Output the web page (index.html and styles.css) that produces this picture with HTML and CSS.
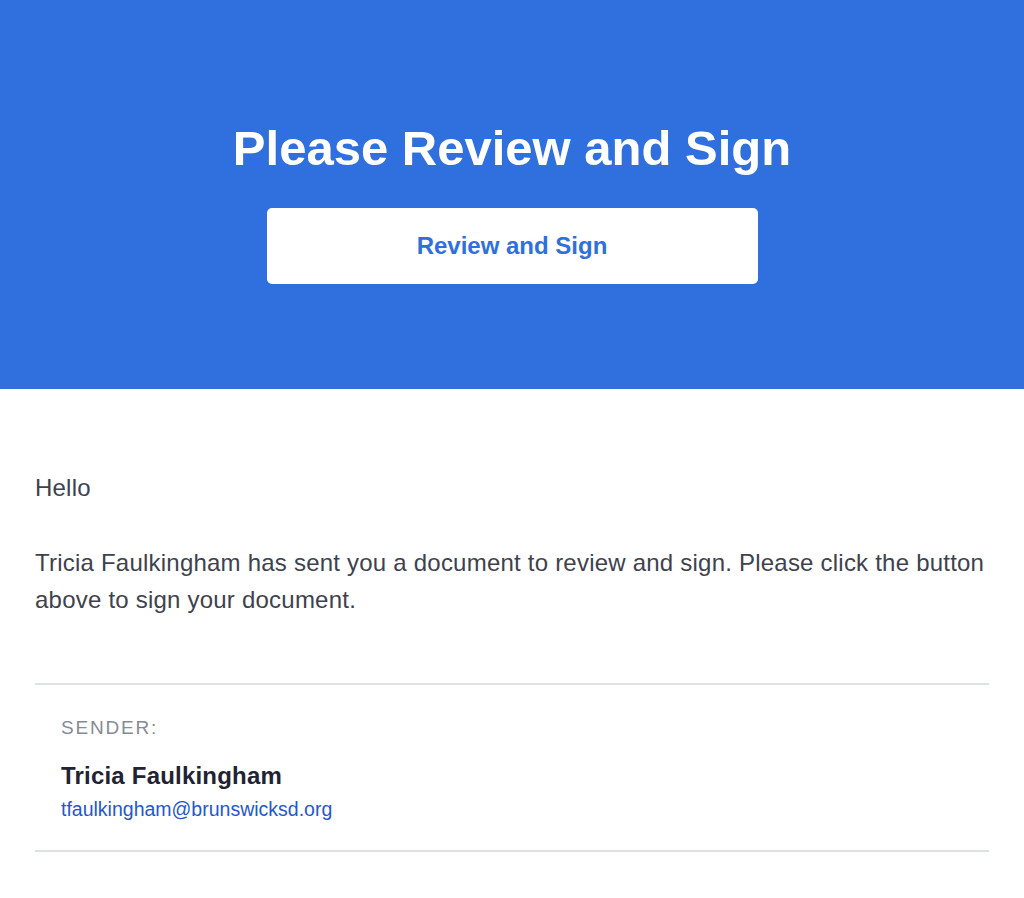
FILE: index.html
```html
<!DOCTYPE html>
<html>
<head>
    <meta charset="UTF-8">
    <meta name="viewport" content="width=device-width, initial-scale=1.0">
    <title>Please Review and Sign</title>
    <link rel="stylesheet" href="styles.css">
</head>
<body>
    <div class="hero">
        <h1 class="hero-title">Please Review and Sign</h1>
        <a class="hero-button" href="#">Review and Sign</a>
    </div>
    <div class="content">
        <p class="greeting">Hello</p>
        <p class="message">Tricia Faulkingham has sent you a document to review and sign. Please click the button above to sign your document.</p>
        <div class="sender">
            <div class="sender-label">SENDER:</div>
            <div class="sender-name">Tricia Faulkingham</div>
            <a class="sender-email" href="#">tfaulkingham@brunswicksd.org</a>
        </div>
    </div>
</body>
</html>
```

FILE: styles.css
```css
body {
    margin: 0;
    background: #ffffff;
    font-family: "Liberation Sans", Arial, sans-serif;
}
.hero {
    display: flex;
    flex-direction: column;
    align-items: center;
    height: 389px;
    box-sizing: border-box;
    padding-top: 120px;
    background: #2f6fde;
}
.hero-title {
    margin: 0;
    font-size: 49px;
    line-height: 56px;
    font-weight: bold;
    color: #ffffff;
}
.hero-button {
    display: flex;
    justify-content: center;
    align-items: center;
    margin-top: 32px;
    width: 491px;
    height: 76px;
    background: #ffffff;
    border-radius: 5px;
    color: #2f6fde;
    font-size: 24px;
    font-weight: bold;
    text-decoration: none;
}
.content {
    padding: 80px 35px 0;
    color: #3e424e;
    font-size: 24px;
    line-height: 37px;
    letter-spacing: 0.22px;
}
.greeting {
    margin: 0 0 38px;
}
.message {
    margin: 0 0 65px;
}
.sender {
    display: flex;
    flex-direction: column;
    align-items: flex-start;
    padding: 31px 26px 29px;
    border-top: 2px solid #dde1e6;
    border-bottom: 2px solid #dde1e6;
    letter-spacing: 0;
}
.sender-label {
    font-size: 19px;
    line-height: 24px;
    letter-spacing: 1.8px;
    color: #858a97;
}
.sender-name {
    margin-top: 21px;
    font-size: 24px;
    line-height: 30px;
    font-weight: bold;
    letter-spacing: 0.2px;
    color: #1f2333;
}
.sender-email {
    margin-top: 6px;
    font-size: 19.5px;
    line-height: 24px;
    color: #2457d0;
    text-decoration: none;
}
```
